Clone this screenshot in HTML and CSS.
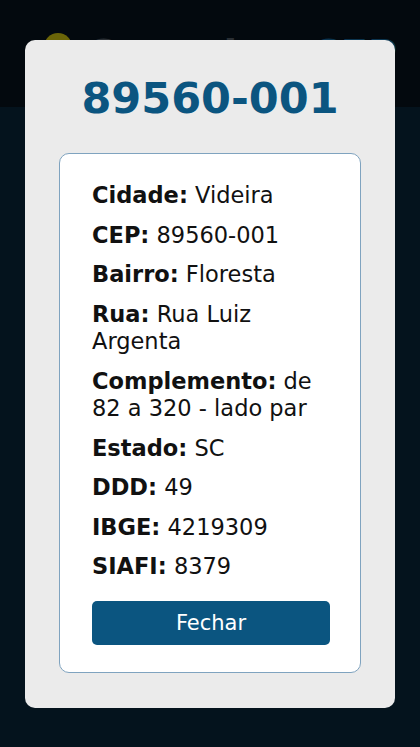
FILE: index.html
```html
<!DOCTYPE html>
<html lang="pt-BR">
<head>
<meta charset="utf-8">
<title>Consulta CEP</title>
<link rel="stylesheet" href="styles.css">
</head>
<body>
<header class="site-header">
  <span class="logo-dot"></span>
  <span class="brand">Consulta <span class="brand-cep">CEP</span></span>
</header>
<main class="page"></main>

<div class="overlay">
  <div class="modal">
    <h1 class="modal-title">89560-001</h1>
    <div class="card">
      <p class="row"><b>Cidade:</b> Videira</p>
      <p class="row"><b>CEP:</b> 89560-001</p>
      <p class="row"><b>Bairro:</b> Floresta</p>
      <p class="row"><b>Rua:</b> Rua Luiz Argenta</p>
      <p class="row"><b>Complemento:</b> de 82 a 320 - lado par</p>
      <p class="row"><b>Estado:</b> SC</p>
      <p class="row"><b>DDD:</b> 49</p>
      <p class="row"><b>IBGE:</b> 4219309</p>
      <p class="row"><b>SIAFI:</b> 8379</p>
      <button class="close-btn" type="button">Fechar</button>
    </div>
  </div>
</div>
</body>
</html>
```

FILE: styles.css
```css
* { box-sizing: border-box; }
html, body { margin: 0; padding: 0; }
body {
  width: 420px;
  height: 747px;
  overflow: hidden;
  background: #04131d;
  font-family: "DejaVu Sans", sans-serif;
}
.site-header {
  height: 107px;
  background: #03090e;
  display: flex;
  align-items: flex-start;
  gap: 14px;
  padding: 33px 0 0 44px;
}
.logo-dot {
  width: 28px;
  height: 28px;
  border-radius: 50%;
  background: #6b6508;
  flex: none;
}
.brand {
  font-size: 40px;
  font-weight: bold;
  color: #2a2f34;
  line-height: 1;
  margin-top: 2px;
}
.brand-cep { color: #0b3550; margin-left: 14px; }
.page { height: 640px; }

.overlay {
  position: fixed;
  inset: 0;
  display: flex;
  justify-content: center;
  padding-top: 40px;
}
.modal {
  width: 370px;
  height: 668px;
  background: #ebebeb;
  border-radius: 10px;
  padding: 30px 34px 0;
}
.modal-title {
  margin: 0;
  text-align: center;
  color: #0b5580;
  font-size: 43px;
  font-weight: bold;
  line-height: 56px;
}
.card {
  margin-top: 27px;
  background: #fff;
  border: 1px solid #7fa3bf;
  border-radius: 10px;
  height: 520px;
  padding: 28px 29px 0 32px;
  display: flex;
  flex-direction: column;
  gap: 12px;
}
.row {
  margin: 0;
  font-size: 22.5px;
  line-height: 27.5px;
  color: #111;
}
.row b { font-weight: bold; color: #111; }
.close-btn {
  margin-top: 8px;
  height: 44px;
  width: 238px;
  border: none;
  border-radius: 5px;
  background: #0b5580;
  color: #fff;
  font-family: inherit;
  font-size: 21px;
}
```
